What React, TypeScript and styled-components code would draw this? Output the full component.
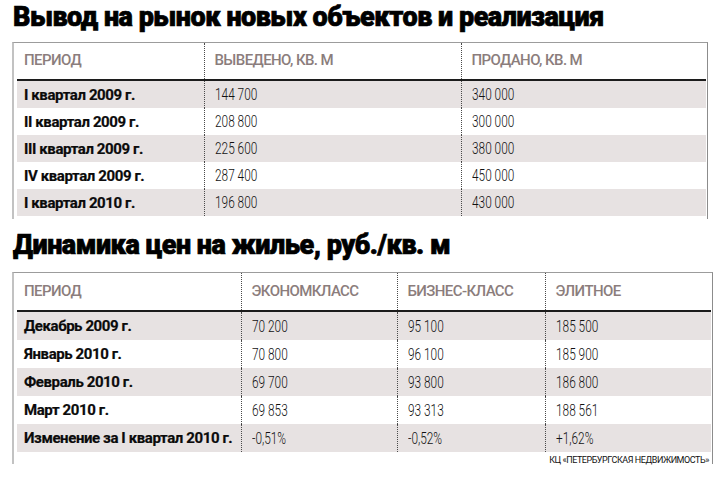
import React from 'react';
import styled, { createGlobalStyle } from 'styled-components';

const GlobalStyle = createGlobalStyle`
  html, body {
    margin: 0;
    padding: 0;
    background: #fff;
  }
  body {
    font-family: Roboto, "Liberation Sans", sans-serif;
    color: #111;
  }
`;

const Page = styled.div`
  width: 725px;
  height: 478px;
  padding-left: 12px;
  box-sizing: border-box;
  display: flex;
  flex-direction: column;
  align-items: flex-start;
`;

const Title = styled.h1<{ $gap: number }>`
  margin: ${(p) => p.$gap}px 0 0 1px;
  font-family: Roboto, "Liberation Sans", sans-serif;
  font-weight: 900;
  font-size: 27px;
  line-height: 34px;
  letter-spacing: -0.5px;
  -webkit-text-stroke: 0.7px #000;
  color: #000;
  white-space: nowrap;
`;

const Frame = styled.div<{ $width: number; $top: number; $bottom: number }>`
  margin-top: ${(p) => p.$top}px;
  width: ${(p) => p.$width}px;
  box-sizing: border-box;
  border-top: 1px solid #9c9c9c;
  border-left: 2px solid #c2c2c2;
  border-right: 1px solid #8c8c8c;
  padding: 0 1px ${(p) => p.$bottom}px 3px;
`;

const Table = styled.table`
  width: 100%;
  table-layout: fixed;
  border-collapse: collapse;
`;

const HeadCell = styled.th<{ $height: number }>`
  height: ${(p) => p.$height}px;
  padding: 0 0 2px 10px;
  text-align: left;
  vertical-align: middle;
  font-family: Roboto, "Liberation Sans", sans-serif;
  font-weight: 500;
  font-size: 15px;
  letter-spacing: -0.6px;
  color: #8b7d7c;
  white-space: nowrap;
  border-bottom: 2px solid #1c1c1c;
  border-left: 1px dotted #4a4a4a;

  &:first-child {
    padding-left: 7px;
    border-left: none;
  }
`;

const Row = styled.tr<{ $shaded: boolean }>`
  background: ${(p) => (p.$shaded ? '#e7e2e2' : 'transparent')};

  & + & > td {
    border-top: 1px dotted #5a5a5a;
  }
`;

const Label = styled.td<{ $height: number }>`
  height: ${(p) => p.$height}px;
  padding: 0 0 0 7px;
  font-family: Roboto, "Liberation Sans", sans-serif;
  font-weight: 700;
  font-size: 15px;
  letter-spacing: -0.4px;
  -webkit-text-stroke: 0.2px #000;
  color: #0c0c0c;
  white-space: nowrap;
`;

const Value = styled.td`
  padding: 0 0 0 10px;
  border-left: 1px dotted #4a4a4a;
  white-space: nowrap;
`;

const Num = styled.span`
  display: inline-block;
  transform: scaleX(0.74);
  transform-origin: left center;
  font-family: Roboto, "Liberation Sans", sans-serif;
  font-weight: 300;
  font-size: 16px;
  color: #111;
`;

const Source = styled.div`
  height: 12px;
  padding-right: 2px;
  text-align: right;
  font-family: Roboto, "Liberation Sans", sans-serif;
  font-size: 9px;
  letter-spacing: -0.45px;
  line-height: 16px;
  color: #111;
`;

type TableData = {
  columns: number[];
  head: string[];
  rows: string[][];
};

const supply: TableData = {
  columns: [187, 257],
  head: ['ПЕРИОД', 'ВЫВЕДЕНО, КВ. М', 'ПРОДАНО, КВ. М'],
  rows: [
    ['I квартал 2009 г.', '144 700', '340 000'],
    ['II квартал 2009 г.', '208 800', '300 000'],
    ['III квартал 2009 г.', '225 600', '380 000'],
    ['IV квартал 2009 г.', '287 400', '450 000'],
    ['I квартал 2010 г.', '196 800', '430 000'],
  ],
};

const prices: TableData = {
  columns: [224, 156, 148],
  head: ['ПЕРИОД', 'ЭКОНОМКЛАСС', 'БИЗНЕС-КЛАСС', 'ЭЛИТНОЕ'],
  rows: [
    ['Декабрь 2009 г.', '70 200', '95 100', '185 500'],
    ['Январь 2010 г.', '70 800', '96 100', '185 900'],
    ['Февраль 2010 г.', '69 700', '93 800', '186 800'],
    ['Март 2010 г.', '69 853', '93 313', '188 561'],
    ['Изменение за I квартал 2010 г.', '-0,51%', '-0,52%', '+1,62%'],
  ],
};

const DataTable: React.FC<{ data: TableData; headHeight: number; rowHeight: number }> = ({
  data,
  headHeight,
  rowHeight,
}) => (
  <Table>
    <colgroup>
      {data.head.map((h, i) => (
        <col key={h} style={i < data.columns.length ? { width: data.columns[i] } : undefined} />
      ))}
    </colgroup>
    <thead>
      <tr>
        {data.head.map((h) => (
          <HeadCell key={h} $height={headHeight}>
            {h}
          </HeadCell>
        ))}
      </tr>
    </thead>
    <tbody>
      {data.rows.map((r, i) => (
        <Row key={r[0]} $shaded={i % 2 === 0}>
          <Label $height={rowHeight}>{r[0]}</Label>
          {r.slice(1).map((v, j) => (
            <Value key={j}>
              <Num>{v}</Num>
            </Value>
          ))}
        </Row>
      ))}
    </tbody>
  </Table>
);

const App: React.FC = () => {
  return (
    <>
      <GlobalStyle />
      <Page>
        <Title $gap={0}>Вывод на рынок новых объектов и реализация</Title>
        <Frame $width={696} $top={8} $bottom={3}>
          <DataTable data={supply} headHeight={34} rowHeight={27} />
        </Frame>
        <Title $gap={9}>Динамика цен на жилье, руб./кв. м</Title>
        <Frame $width={701} $top={10} $bottom={0}>
          <DataTable data={prices} headHeight={35} rowHeight={28} />
          <Source>КЦ «ПЕТЕРБУРГСКАЯ НЕДВИЖИМОСТЬ»</Source>
        </Frame>
      </Page>
    </>
  );
};

export default App;
